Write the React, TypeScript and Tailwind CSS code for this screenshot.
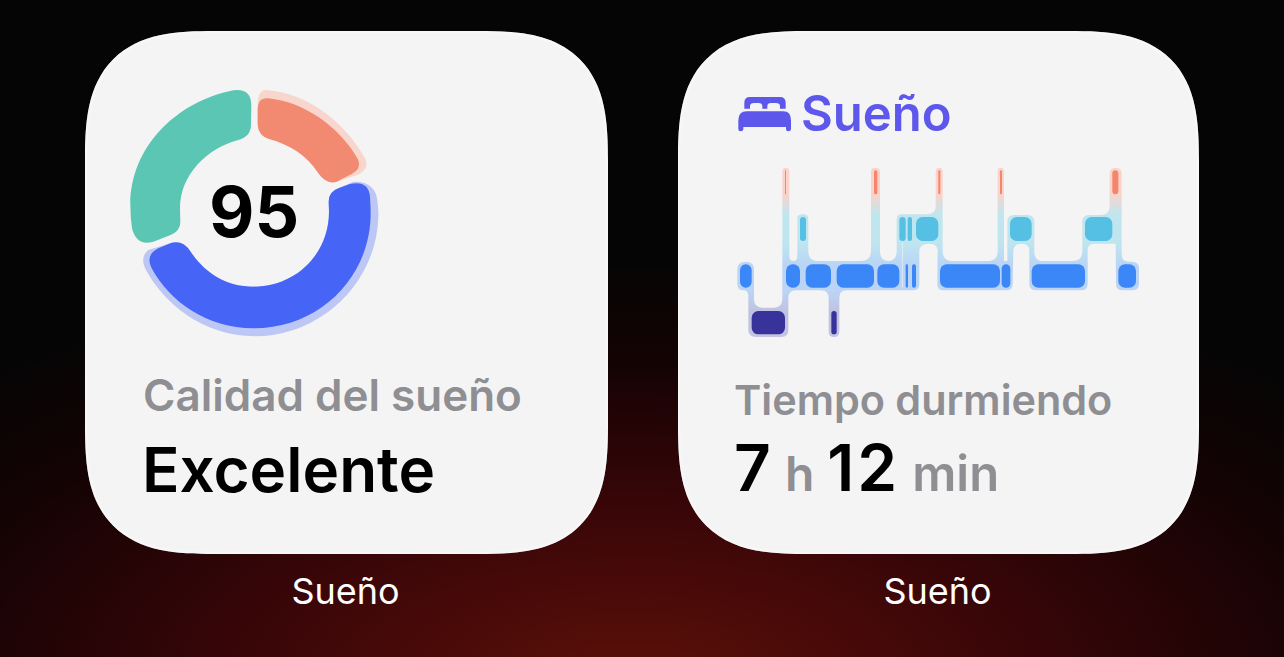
const font = "[font-family:Inter,'Noto_Sans',sans-serif]";

const awake = [
  [165, 3],
  [432, 10],
  [625, 6],
  [810, 6],
  [1147, 18],
];
const rem = [
  [210, 18],
  [508, 19],
  [533, 13],
  [558, 67],
  [840, 65],
  [1065, 82],
];
const core = [
  [30, 35],
  [168, 42],
  [227, 76],
  [320, 112],
  [442, 66],
  [527, 7],
  [546, 12],
  [630, 180],
  [815, 26],
  [905, 160],
  [1165, 53],
];
const deep = [
  [65, 100],
  [304, 16],
];

function Bars({ items, y, h, color }: { items: number[][]; y: number; h: number; color: string }) {
  return (
    <>
      {items.map(([x, w]) => (
        <rect key={x} x={x} y={y} width={w} height={h} rx={Math.min(w / 2, 20)} fill={color} />
      ))}
    </>
  );
}

function QualityRing() {
  return (
    <div className="relative w-[270px] h-[260px]">
      <svg width="270" height="260" viewBox="0 0 810 780">
        <path
          d="M440 30 C560 40 670 120 735 235 Q750 268 712 285 L650 305 Q620 315 595 280 C560 225 510 195 450 178 Q413 168 413 130 L413 70 Q415 28 440 30 Z"
          fill="#f8d5cd"
        />
        <path
          d="M445 55 C550 65 660 140 715 240 Q725 268 695 282 L650 305 Q620 315 595 280 C560 225 510 195 450 178 Q413 168 413 130 L413 85 Q415 50 445 55 Z"
          fill="#f28a72"
        />
        <path
          d="M340 31 Q393 24 394 75 L393 135 Q392 170 355 180 C260 205 180 285 180 385 L181 425 Q182 452 150 466 L100 485 Q50 500 36 445 Q31 410 31 375 C31 200 170 65 340 31 Z"
          fill="#5cc6b4"
        />
        <path
          d="M700 305 Q770 303 773 370 Q776 400 775 410 C770 610 600 769 405 769 C250 769 130 670 75 565 Q60 530 85 510 L155 488 Q190 480 212 515 C255 580 320 620 400 620 C530 620 627 520 627 395 L626 365 Q626 335 655 325 Z"
          fill="#bcc7f5"
        />
        <path
          d="M690 312 Q745 300 750 350 Q752 380 752 400 C752 590 600 745 400 745 C260 745 150 665 95 565 Q75 525 115 505 L155 488 Q190 480 212 515 C255 580 320 620 400 620 C530 620 627 520 627 395 L626 365 Q626 335 655 325 Z"
          fill="#4664f6"
        />
      </svg>
      <span className="absolute left-[89px] top-[92px] text-[70px] leading-[80px] font-bold text-black">95</span>
    </div>
  );
}

function BedIcon() {
  return (
    <svg width="60" height="44" viewBox="0 0 180 132" fill="#5e57ec">
      <path d="M28 50 L28 32 Q28 15 45 15 L135 15 Q152 15 152 32 L152 50 L135 50 L135 43 Q135 33 122 33 L108 33 Q97 33 97 43 L97 50 L82 50 L82 43 Q82 33 70 33 L57 33 Q45 33 45 43 L45 50 Z" />
      <path d="M35 58 L145 58 Q168 58 168 85 L168 112 Q168 118 160 118 Q153 118 153 112 L153 105 L25 105 L25 112 Q25 118 17 118 Q10 118 10 112 L10 85 Q10 58 35 58 Z" />
    </svg>
  );
}

function SleepStages() {
  return (
    <svg width="415" height="180" viewBox="0 0 1245 540" className="mt-[19px]">
      <defs>
        <linearGradient id="stages" gradientUnits="userSpaceOnUse" x1="0" y1="0" x2="0" y2="540">
          <stop offset="0.18" stopColor="#fbd3ca" />
          <stop offset="0.3" stopColor="#bfe6ef" />
          <stop offset="0.45" stopColor="#bfe6ef" />
          <stop offset="0.58" stopColor="#b9d4f6" />
          <stop offset="0.72" stopColor="#bcd4f5" />
          <stop offset="0.85" stopColor="#c0c0e0" />
          <stop offset="1" stopColor="#c6c6e2" />
        </linearGradient>
      </defs>
      <path
        fill="url(#stages)"
        d="M22 325 Q22 302 47 302 Q72 302 72 325 L72 415 Q72 440 97 440 L132 440 Q157 440 157 415 L157 32 Q157 20 167 20 Q178 20 178 32 L178 285 Q178 300 190 300 Q202 300 202 285 L202 172 Q202 160 218 160 Q235 160 235 172 L235 270 Q235 300 262 300 L393 300 Q423 300 423 270 L423 32 Q423 20 436 20 Q450 20 450 32 L450 270 Q450 300 475 300 Q500 300 500 270 L500 175 Q500 160 515 160 L590 160 Q617 160 617 135 L617 32 Q617 20 628 20 Q638 20 638 32 L638 270 Q638 300 665 300 L775 300 Q803 300 803 270 L803 32 Q803 20 812 20 Q822 20 822 32 L822 300 L832 300 L832 182 Q832 162 852 162 L892 162 Q913 162 913 182 L913 270 Q913 300 935 300 L1030 300 Q1057 300 1057 270 L1057 182 Q1057 162 1077 162 L1110 162 Q1139 162 1139 135 L1139 38 Q1139 20 1157 20 Q1175 20 1175 38 L1175 280 Q1175 302 1195 302 L1205 302 Q1227 302 1227 322 L1227 368 Q1227 388 1205 388 L1180 388 Q1158 388 1158 368 L1157 248 L1090 248 Q1073 248 1073 268 L1073 368 Q1073 388 1053 388 L920 388 Q898 388 898 368 L898 270 Q898 248 875 248 Q850 248 850 270 L848 368 Q848 388 828 388 L640 388 Q622 388 622 368 L623 270 Q623 248 597 248 Q568 248 568 270 L568 368 Q568 388 548 388 L350 388 Q328 388 328 410 L328 512 Q328 528 312 528 Q296 528 296 512 L296 412 Q296 388 272 388 L198 388 Q175 388 175 412 L175 508 Q175 528 155 528 L78 528 Q55 528 55 508 L55 405 Q55 388 40 388 Q22 388 22 368 Z"
      />
      <path d="M517 245 L517 380" stroke="#f4f4f4" strokeWidth="2" />
      <Bars items={awake} y={28} h={72} color="#f5856c" />
      <Bars items={rem} y={168} h={72} color="#56bfe4" />
      <Bars items={core} y={310} h={70} color="#3b87f7" />
      <Bars items={deep} y={450} h={70} color="#37339a" />
    </svg>
  );
}

function Widget({ width, children }: { width: string; children: React.ReactNode }) {
  return (
    <div className={`flex flex-col items-center ${width}`}>
      <div className="w-full h-[523px] rounded-[130px] [corner-shape:superellipse(1.5)] bg-[#f4f4f4] shadow-[inset_0_0_5px_#ffffff]">
        {children}
      </div>
      <p className="mt-[17px] pr-[2px] text-[36px] leading-[40px] font-normal text-white">Sueño</p>
    </div>
  );
}

export default function App() {
  return (
    <div
      className={`h-[657px] overflow-hidden bg-[radial-gradient(ellipse_950px_420px_at_630px_680px,#5c1008_0%,#3a0608_40%,#150304_75%,#050505_100%)] ${font}`}
    >
      <div className="flex gap-[70px] pl-[85px] pt-[31px]">
        <Widget width="w-[523px]">
          <div className="pl-[35px] pt-[49px]">
            <QualityRing />
            <div className="pl-[23px] pt-[30px]">
              <p className="text-[44px] leading-[50px] font-semibold text-[#8e8e93]">Calidad del sueño</p>
              <p className="-ml-px mt-[13px] text-[62px] leading-[74px] font-semibold text-black">Excelente</p>
            </div>
          </div>
        </Widget>
        <Widget width="w-[521px]">
          <div className="pl-[52px] pt-[55px]">
            <div className="flex items-center gap-[6px] h-[56px] ml-[5px]">
              <BedIcon />
              <span className="text-[49px] leading-[56px] font-semibold text-[#5e57ec]">Sueño</span>
            </div>
            <SleepStages />
            <div className="pl-[4px] pt-[34px]">
              <p className="text-[41.4px] leading-[50px] font-semibold text-[#8e8e93]">Tiempo durmiendo</p>
              <p className="flex items-baseline mt-[6px] leading-[74px] font-semibold">
                <span className="text-[64px] text-black">7</span>
                <span className="ml-[14px] text-[48px] text-[#8e8e93]">h</span>
                <span className="ml-[13px] text-[64px] tracking-[3px] text-black">12</span>
                <span className="ml-[12px] text-[49px] text-[#8e8e93]">min</span>
              </p>
            </div>
          </div>
        </Widget>
      </div>
    </div>
  );
}
